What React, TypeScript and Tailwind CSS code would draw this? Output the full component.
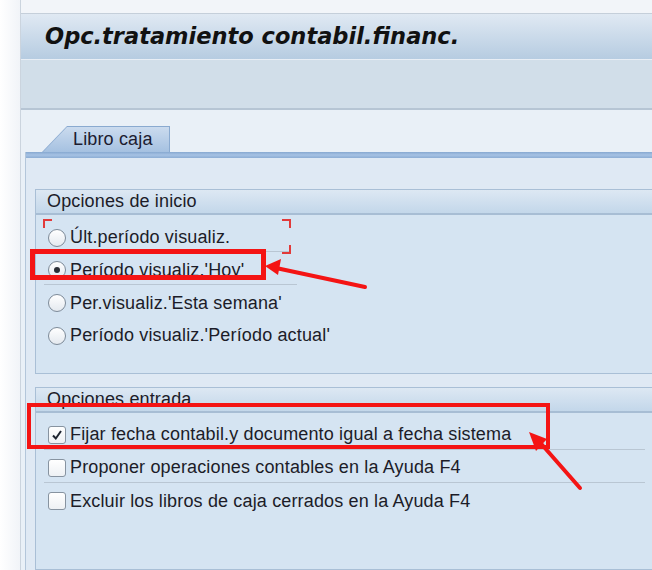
import React from 'react';

const radios = [
  { label: 'Últ.período visualiz.', checked: false, line: 'w-[245px] border-b border-[#b9c6d3]' },
  { label: "Período visualiz.'Hoy'", checked: true, line: 'w-[253px] border-b border-[#b9c6d3]' },
  { label: "Per.visualiz.'Esta semana'", checked: false, line: '' },
  { label: "Período visualiz.'Período actual'", checked: false, line: '' },
];

const checks = [
  { label: 'Fijar fecha contabil.y documento igual a fecha sistema', checked: true, line: true },
  { label: 'Proponer operaciones contables en la Ayuda F4', checked: false, line: true },
  { label: 'Excluir los libros de caja cerrados en la Ayuda F4', checked: false, line: false },
];

const Radio: React.FC<{ checked: boolean }> = ({ checked }) => (
  <div className="w-[18px] h-[18px] rounded-full border border-[#7d8a98] bg-gradient-to-b from-[#ffffff] to-[#e4e9ef] flex items-center justify-center shrink-0">
    {checked && <div className="w-[6px] h-[6px] rounded-full bg-[#2a2f36]" />}
  </div>
);

const Check: React.FC<{ checked: boolean }> = ({ checked }) => (
  <div className="w-[18px] h-[18px] rounded-[3px] border border-[#8793a0] bg-gradient-to-b from-[#ffffff] to-[#eef1f4] flex items-center justify-center shrink-0">
    {checked && (
      <svg width="12" height="12" viewBox="0 0 12 12">
        <path d="M2 6.5 L4.8 9.5 L10 2" fill="none" stroke="#1d2430" strokeWidth="2" />
      </svg>
    )}
  </div>
);

const GroupHeader: React.FC<{ title: string }> = ({ title }) => (
  <div className="h-[25px] pl-[11px] flex items-center bg-gradient-to-b from-[#dde8f3] to-[#c3d7ea] border-b-2 border-[#a7bdd4] text-[18px] tracking-[0.15px] text-[#1c1c28]">
    {title}
  </div>
);

export default function App() {
  return (
    <div className="relative w-[652px] h-[570px] overflow-hidden flex bg-white font-['Liberation_Sans',Arial,sans-serif]">
      {/* left strip */}
      <div className="w-[21px] shrink-0 bg-gradient-to-r from-[#ffffff] to-[#f1f4f8] border-r border-[#cbd4de]" />

      <div className="flex-1 flex flex-col min-w-0">
        <div className="h-[14px] shrink-0 bg-[#f2f5f9] border-b border-[#c5cfda]" />

        {/* title bar */}
        <div className="h-[46px] shrink-0 pl-[24px] flex items-center bg-gradient-to-b from-[#e0e9f3] to-[#b6cce1] border-b border-[#e8eef5]">
          <span className="text-[22.5px] font-bold italic text-[#111111] font-['DejaVu_Sans',Verdana,sans-serif]">Opc.tratamiento contabil.financ.</span>
        </div>

        {/* toolbar */}
        <div className="h-[50px] shrink-0 bg-[#d1dee9] border-b-2 border-[#b6c5d4]" />

        {/* content */}
        <div className="flex-1 flex flex-col bg-[#e9f0f7] pl-[4px]">
          <div className="h-[42px] shrink-0 flex items-end pl-[17px]">
            <div className="w-[128px] h-[26px] bg-[#8aaad0] pt-[1px] pr-[1px] [clip-path:polygon(25px_0,100%_0,100%_100%,0_100%)]">
              <div className="h-full pl-[31px] flex items-center bg-gradient-to-b from-[#cbdbee] to-[#a5c1e1] text-[18px] tracking-[0.15px] text-[#1c1c30] [clip-path:polygon(25px_0,100%_0,100%_100%,1px_100%)]">
                Libro caja
              </div>
            </div>
          </div>

          <div className="flex-1 flex flex-col border-l border-[#b3c6da] bg-[#dfe9f4]">
            <div className="h-[6px] shrink-0 bg-gradient-to-b from-[#86a8d0] via-[#a6c2e4] to-[#8cadd4]" />
            <div className="flex-1 pl-[9px] pt-[31px] flex flex-col">
              {/* group 1 */}
              <div className="h-[185px] shrink-0 -mr-[20px] border border-[#a9bfd6] bg-[#d5e4f2] flex flex-col">
                <GroupHeader title="Opciones de inicio" />
                <div className="pt-[9px] pl-[8px] flex flex-col">
                  {radios.map(r => (
                    <div key={r.label} className="h-[32.5px]">
                      <div className={`h-[28px] pl-[4px] flex items-center gap-[4px] ${r.line}`}>
                        <Radio checked={r.checked} />
                        <span className="text-[18px] tracking-[0.15px] text-[#1c1c28] whitespace-nowrap">{r.label}</span>
                      </div>
                    </div>
                  ))}
                </div>
              </div>

              {/* group 2 */}
              <div className="flex-1 mt-[13px] -mr-[20px] border border-[#a9bfd6] bg-[#d5e4f2] flex flex-col">
                <GroupHeader title="Opciones entrada" />
                <div className="pt-[7px] pl-[8px] flex flex-col">
                  {checks.map(c => (
                    <div key={c.label} className="h-[33px]">
                      <div className={`h-[30px] w-[601px] pl-[4px] flex items-center gap-[4px] ${c.line ? 'border-b border-[#b9c6d3]' : ''}`}>
                        <Check checked={c.checked} />
                        <span className="text-[18px] tracking-[0.15px] text-[#1c1c28] whitespace-nowrap">{c.label}</span>
                      </div>
                    </div>
                  ))}
                </div>
              </div>
            </div>
          </div>
        </div>
      </div>

      {/* annotations */}
      <svg className="absolute inset-0 pointer-events-none" width="652" height="570" viewBox="0 0 652 570">
        <g fill="none" stroke="#e23a3a" strokeWidth="2">
          <path d="M44 228 V220 H52" />
          <path d="M282 220 H290 V228" />
          <path d="M290 245 V253 H282" />
        </g>
        <rect x="32.5" y="251.5" width="231" height="26" fill="none" stroke="#f41414" strokeWidth="5" />
        <line x1="365" y1="287" x2="276" y2="268" stroke="#f41414" strokeWidth="4" strokeLinecap="round" />
        <polygon points="265,266 281,259 278,275" fill="#f41414" />
        <rect x="29" y="405" width="519" height="42" fill="none" stroke="#f41414" strokeWidth="4" />
        <line x1="580" y1="488" x2="537" y2="439" stroke="#f41414" strokeWidth="4" strokeLinecap="round" />
        <polygon points="529,432 547,439 536,451" fill="#f41414" />
      </svg>
    </div>
  );
}
